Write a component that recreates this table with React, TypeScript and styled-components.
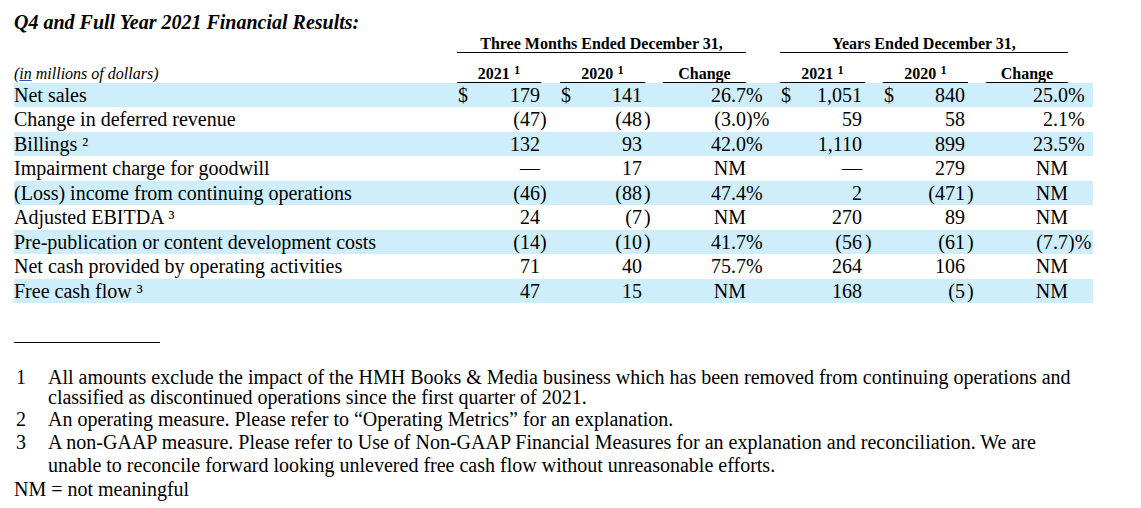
import React from "react"
import styled, { createGlobalStyle } from "styled-components"

const GlobalStyle = createGlobalStyle`
	html, body {
		margin: 0;
		padding: 0;
		background: #fff;
	}
	body {
		font-family: "Liberation Serif", "Times New Roman", serif;
		color: #000;
	}
`

// label | Q 2021 | Q 2020 | Q change | Y 2021 | Y 2020 | Y change | rest
const COLS = "443px 84px 104px 101px 119px 103px 100px 1fr"

const Page = styled.div`
	width: 1141px;
	height: 508px;
	box-sizing: border-box;
	padding: 11px 0 0 14px;
	overflow: hidden;
`
const Title = styled.div`
	font-size: 20px;
	line-height: 23px;
	font-weight: bold;
	font-style: italic;
`
const Table = styled.div`
	width: 1079px;
`
const HeadRow = styled.div<{ $top: number }>`
	display: grid;
	grid-template-columns: ${COLS};
	margin-top: ${(p) => p.$top}px;
	align-items: end;
	white-space: nowrap;
`
const Units = styled.div`
	font-size: 16px;
	line-height: 16px;
	font-style: italic;
	padding-bottom: 1px;

	u {
		text-decoration-color: #2f56d8;
	}
`
const HeadCell = styled.div<{ $gap: number; $span?: number }>`
	padding-left: ${(p) => p.$gap}px;
	grid-column: span ${(p) => p.$span || 1};
`
const HeadText = styled.div`
	border-bottom: 1px solid #000;
	text-align: center;
	font-size: 16px;
	line-height: 16px;
	font-weight: bold;
`
const Sup = styled.span`
	font-size: 19px;
`
const Row = styled.div<{ $shaded?: boolean }>`
	display: grid;
	grid-template-columns: ${COLS};
	height: 24.44px;
	line-height: 25px;
	font-size: 20px;
	white-space: nowrap;
	background: ${(p) => (p.$shaded ? "#cfeefb" : "transparent")};
`
const Label = styled.div``
const Cell = styled.div<{ $gap: number; $pr: number }>`
	display: flex;
	padding-left: ${(p) => p.$gap}px;
	padding-right: ${(p) => p.$pr}px;
`
const Dollar = styled.span`
	padding-left: 1px;
`
const Num = styled.span`
	margin-left: auto;
`
const Hang = styled.span<{ $gap: number }>`
	display: inline-block;
	width: 0;
	text-indent: ${(p) => p.$gap}px;
	white-space: nowrap;
`
const Rule = styled.div`
	width: 146px;
	height: 1px;
	background: #000;
	margin-top: 39px;
`
const Notes = styled.div`
	margin-top: 24px;
	width: 1066px;
	font-size: 20px;
	line-height: 22px;
`
const Note = styled.div<{ $lh?: number }>`
	display: grid;
	grid-template-columns: 34px 1fr;
	line-height: ${(p) => p.$lh || 22}px;
	margin-bottom: 1px;
`
const NoteNo = styled.div`
	padding-left: 2px;
`

const columns = [
	{ gap: 0, pr: 1, hang: 0 },
	{ gap: 19, pr: 3, hang: 2 },
	{ gap: 18, pr: 0, hang: 0 },
	{ gap: 34, pr: 3, hang: 3 },
	{ gap: 18, pr: 3, hang: 2 },
	{ gap: 18, pr: 0, hang: 0 },
]

const rows: { label: string; sup?: string; dollar?: boolean; values: string[] }[] = [
	{ label: "Net sales", dollar: true, values: ["179", "141", "26.7%", "1,051", "840", "25.0%"] },
	{ label: "Change in deferred revenue", values: ["(47)", "(48)", "(3.0)%", "59", "58", "2.1%"] },
	{ label: "Billings", sup: "²", values: ["132", "93", "42.0%", "1,110", "899", "23.5%"] },
	{ label: "Impairment charge for goodwill", values: ["—", "17", "NM", "—", "279", "NM"] },
	{ label: "(Loss) income from continuing operations", values: ["(46)", "(88)", "47.4%", "2", "(471)", "NM"] },
	{ label: "Adjusted EBITDA", sup: "³", values: ["24", "(7)", "NM", "270", "89", "NM"] },
	{ label: "Pre-publication or content development costs", values: ["(14)", "(10)", "41.7%", "(56)", "(61)", "(7.7)%"] },
	{ label: "Net cash provided by operating activities", values: ["71", "40", "75.7%", "264", "106", "NM"] },
	{ label: "Free cash flow", sup: "³", values: ["47", "15", "NM", "168", "(5)", "NM"] },
]

const subHeads = ["2021", "2020", "Change", "2021", "2020", "Change"]

const notes = [
	{
		no: "1",
		lh: 20,
		text: "All amounts exclude the impact of the HMH Books & Media business which has been removed from continuing operations and classified as discontinued operations since the first quarter of 2021.",
	},
	{ no: "2", lh: 22, text: "An operating measure. Please refer to “Operating Metrics” for an explanation." },
	{
		no: "3",
		lh: 23,
		text: "A non-GAAP measure. Please refer to Use of Non-GAAP Financial Measures for an explanation and reconciliation. We are unable to reconcile forward looking unlevered free cash flow without unreasonable efforts.",
	},
]

const split = (v: string) => {
	const m = v.match(/^(.*?)(\)?%?)$/)
	return m ? [m[1], m[2]] : [v, ""]
}

const Value = ({ value, col, dollar }: { value: string; col: number; dollar?: boolean }) => {
	const c = columns[col]
	const [num, tail] = split(value)
	const isPct = col === 2 || col === 5
	return (
		<Cell $gap={c.gap} $pr={c.pr}>
			{dollar && !isPct && <Dollar>$</Dollar>}
			<Num>
				{num}
				{tail && <Hang $gap={tail.startsWith(")") ? c.hang : 0}>{tail}</Hang>}
			</Num>
		</Cell>
	)
}

export default function App() {
	return (
		<Page>
			<GlobalStyle />
			<Title>Q4 and Full Year 2021 Financial Results:</Title>
			<Table>
				<HeadRow $top={2}>
					<div />
					<HeadCell $gap={0} $span={3}>
						<HeadText>Three Months Ended December 31,</HeadText>
					</HeadCell>
					<HeadCell $gap={34} $span={3}>
						<HeadText>Years Ended December 31,</HeadText>
					</HeadCell>
				</HeadRow>
				<HeadRow $top={12}>
					<Units>
						(<u>in</u> millions of dollars)
					</Units>
					{subHeads.map((h, i) => (
						<HeadCell key={i} $gap={columns[i].gap}>
							<HeadText>
								{h}
								{h !== "Change" && <Sup> ¹</Sup>}
							</HeadText>
						</HeadCell>
					))}
				</HeadRow>
				{rows.map((r, i) => (
					<Row key={r.label} $shaded={i % 2 === 0}>
						<Label>
							{r.label}
							{r.sup && ` ${r.sup}`}
						</Label>
						{r.values.map((v, j) => (
							<Value key={j} value={v} col={j} dollar={r.dollar} />
						))}
						<div />
					</Row>
				))}
			</Table>
			<Rule />
			<Notes>
				{notes.map((n) => (
					<Note key={n.no} $lh={n.lh}>
						<NoteNo>{n.no}</NoteNo>
						<div>{n.text}</div>
					</Note>
				))}
				<div>NM = not meaningful</div>
			</Notes>
		</Page>
	)
}
